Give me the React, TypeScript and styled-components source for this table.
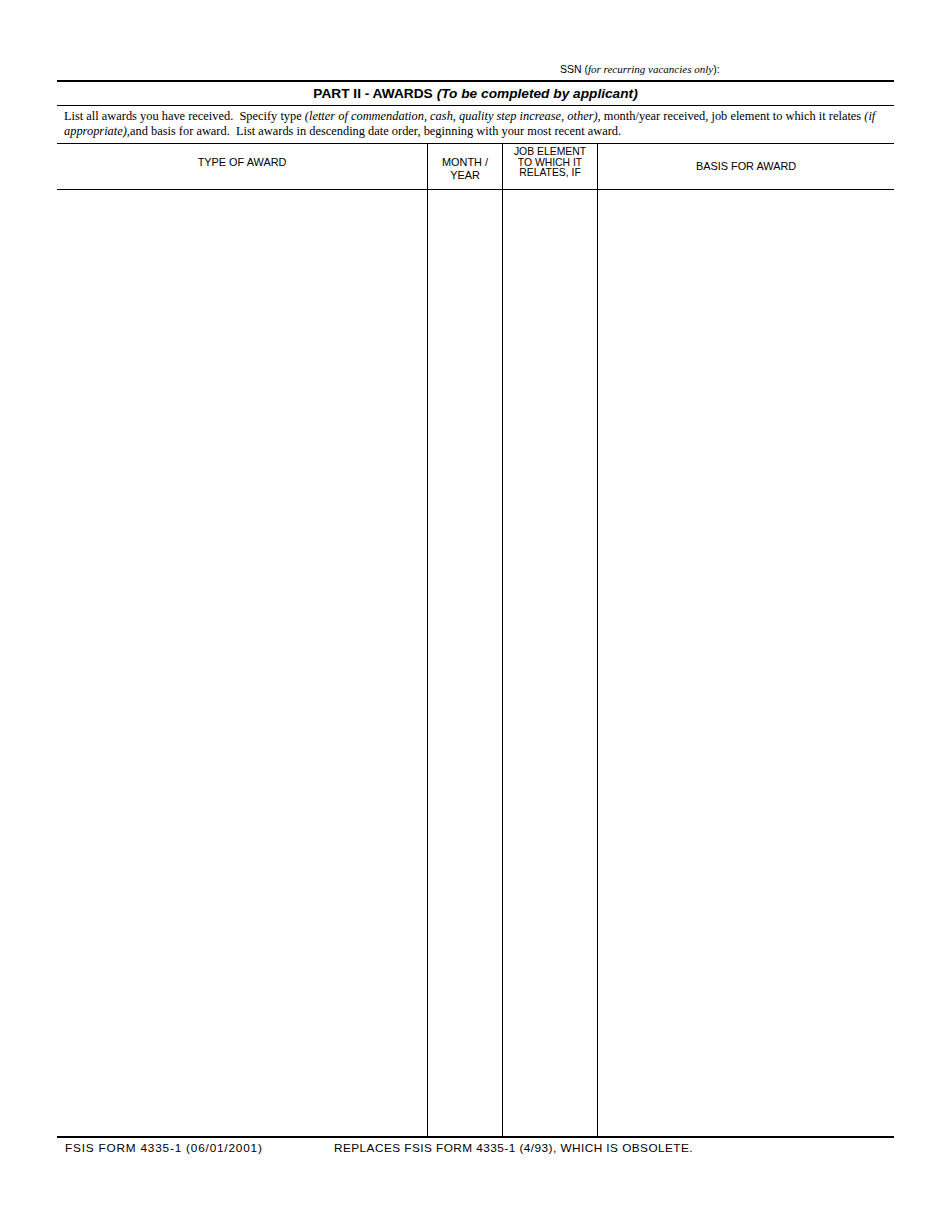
import React from "react";
import styled, { createGlobalStyle } from "styled-components";

const Global = createGlobalStyle`
  html, body { margin: 0; padding: 0; background: #fff; }
  body { color: #000; font-family: "Liberation Sans", Arial, sans-serif; }
`;

const Page = styled.div`
  width: 950px;
  height: 1230px;
  box-sizing: border-box;
  padding: 0 56px 0 57px;
`;

const Form = styled.div`
  width: 837px;
  display: flex;
  flex-direction: column;
`;

const SsnRow = styled.div`
  height: 80px;
  box-sizing: border-box;
  padding: 63px 0 0 503px;
  font-size: 10.5px;
  line-height: 12px;
  font-family: "Liberation Sans", Arial, sans-serif;
`;

const SerifItalic = styled.span`
  font-family: "Liberation Serif", "Times New Roman", serif;
  font-style: italic;
  font-size: 11px;
`;

const Title = styled.div`
  border-top: 2px solid #000;
  border-bottom: 1px solid #000;
  height: 23px;
  display: flex;
  align-items: center;
  justify-content: center;
  font-weight: bold;
  font-size: 13.7px;
`;

const TitleNote = styled.span`
  font-style: italic;
  margin-left: 4px;
`;

const Instructions = styled.div`
  height: 37px;
  box-sizing: border-box;
  padding: 3px 0 0 7px;
  font-family: "Liberation Serif", "Times New Roman", serif;
  font-size: 12.4px;
  line-height: 15px;
`;

const Em = styled.span`
  font-style: italic;
`;

const Grid = styled.div`
  display: grid;
  grid-template-columns: 370px 75px 95px 297px;
  border-top: 1px solid #000;
`;

const HeadCell = styled.div<{ $first?: boolean; $pad?: number; $size?: number; $lh?: number }>`
  height: 46px;
  box-sizing: border-box;
  border-left: ${(p) => (p.$first ? "none" : "1px solid #000")};
  border-bottom: 1px solid #000;
  padding-top: ${(p) => p.$pad ?? 13}px;
  text-align: center;
  font-size: ${(p) => p.$size ?? 10.9}px;
  line-height: ${(p) => p.$lh ?? 13}px;
`;

const BodyCell = styled.div<{ $first?: boolean }>`
  height: 946px;
  border-left: ${(p) => (p.$first ? "none" : "1px solid #000")};
`;

const Footer = styled.div`
  border-top: 2px solid #000;
  display: flex;
  padding: 4px 0 0 8px;
  font-size: 11.8px;
  line-height: 13px;
  letter-spacing: 0.45px;
`;

const FooterLeft = styled.span`
  width: 269px;
  letter-spacing: 0.8px;
`;

export default function App() {
  return (
    <>
      <Global />
      <Page>
        <Form>
          <SsnRow>
            SSN (<SerifItalic>for recurring vacancies only</SerifItalic>):
          </SsnRow>
          <Title>
            PART II - AWARDS<TitleNote>(To be completed by applicant)</TitleNote>
          </Title>
          <Instructions>
            List all awards you have received.&nbsp; Specify type{" "}
            <Em>(letter of commendation, cash, quality step increase, other)</Em>, month/year received, job
            element to which it relates <Em>(if appropriate),</Em>and basis for award.&nbsp; List awards in
            descending date order, beginning with your most recent award.
          </Instructions>
          <Grid>
            <HeadCell $first $pad={12}>TYPE OF AWARD</HeadCell>
            <HeadCell $pad={12}>
              MONTH /<br />
              YEAR
            </HeadCell>
            <HeadCell $pad={3} $size={10.4} $lh={10.5}>
              JOB ELEMENT
              <br />
              TO WHICH IT
              <br />
              RELATES, IF
            </HeadCell>
            <HeadCell $pad={16}>BASIS FOR AWARD</HeadCell>
            <BodyCell $first />
            <BodyCell />
            <BodyCell />
            <BodyCell />
          </Grid>
          <Footer>
            <FooterLeft>FSIS FORM 4335-1 (06/01/2001)</FooterLeft>
            <span>REPLACES FSIS FORM 4335-1 (4/93), WHICH IS OBSOLETE.</span>
          </Footer>
        </Form>
      </Page>
    </>
  );
}
